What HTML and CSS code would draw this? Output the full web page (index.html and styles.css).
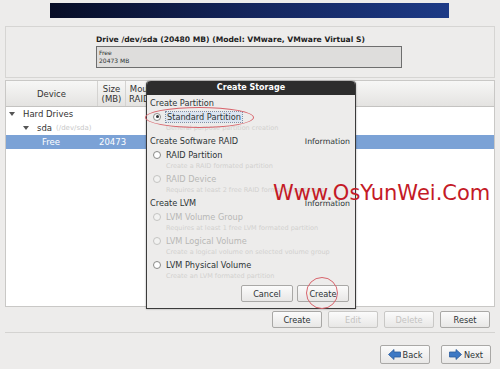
FILE: index.html
```html
<!DOCTYPE html>
<html lang="en">

<head>
    <meta charset="UTF-8">
    <meta name="viewport" content="width=device-width, initial-scale=1.0">
    <title>Create Storage</title>
    <link rel="stylesheet" href="styles.css">
</head>

<body>
    <!-- Banner -->
    <div class="banner"></div>

    <!-- Drive summary -->
    <div class="drive-panel">
        <div class="drive-title">Drive /dev/sda (20480 MB) (Model: VMware, VMware Virtual S)</div>
        <div class="drive-bar">
            <span>Free</span>
            <span>20473 MB</span>
        </div>
    </div>

    <!-- Device table -->
    <div class="table-area">
        <div class="table-head">
            <div class="col col-device">Device</div>
            <div class="col col-size">Size<br>(MB)</div>
            <div class="col col-mount">Mount Point/<br>RAID/Volume</div>
        </div>
        <div class="table-body">
            <div class="row">
                <span class="tri"></span><span>Hard Drives</span>
            </div>
            <div class="row row-sda">
                <span class="tri"></span><span>sda</span><span class="faint">(/dev/sda)</span>
            </div>
            <div class="row row-free">
                <span class="free-name">Free</span><span class="free-size">20473</span>
            </div>
        </div>

        <!-- Create Storage dialog -->
        <div class="dialog">
            <div class="dialog-title">Create Storage</div>
            <div class="dialog-body">
                <div class="group-head">Create Partition</div>
                <div class="option">
                    <span class="radio checked"></span><span class="focus">Standard Partition</span>
                </div>
                <div class="hint">General purpose partition creation</div>

                <div class="group-head">Create Software RAID <span class="info">Information</span></div>
                <div class="option">
                    <span class="radio"></span><span>RAID Partition</span>
                </div>
                <div class="hint">Create a RAID formated partition</div>
                <div class="option disabled">
                    <span class="radio"></span><span>RAID Device</span>
                </div>
                <div class="hint">Requires at least 2 free RAID formated partitions</div>

                <div class="group-head">Create LVM <span class="info">Information</span></div>
                <div class="option disabled">
                    <span class="radio"></span><span>LVM Volume Group</span>
                </div>
                <div class="hint">Requires at least 1 free LVM formated partition</div>
                <div class="option disabled">
                    <span class="radio"></span><span>LVM Logical Volume</span>
                </div>
                <div class="hint">Create a logical volume on selected volume group</div>
                <div class="option">
                    <span class="radio"></span><span>LVM Physical Volume</span>
                </div>
                <div class="hint">Create an LVM formated partition</div>

                <div class="dialog-buttons">
                    <button class="btn">Cancel</button>
                    <button class="btn">Create</button>
                </div>
            </div>
        </div>

        <!-- Red marks over the screenshot -->
        <div class="mark-ellipse"></div>
        <div class="mark-circle"></div>
        <div class="watermark">Www.OsYunWei.Com</div>
    </div>

    <!-- Table actions -->
    <div class="actions">
        <button class="btn">Create</button>
        <button class="btn" disabled>Edit</button>
        <button class="btn" disabled>Delete</button>
        <button class="btn">Reset</button>
    </div>

    <div class="separator"></div>

    <!-- Navigation -->
    <div class="nav">
        <button class="btn nav-btn">
            <svg width="13" height="11" viewBox="0 0 13 11">
                <path d="M0.5 5.5 L6 0.5 L6 3 L12.5 3 L12.5 8 L6 8 L6 10.5 Z" fill="#3d78c4" stroke="#2a5a9c" stroke-width="0.8"/>
            </svg>Back
        </button>
        <button class="btn nav-btn">
            <svg width="13" height="11" viewBox="0 0 13 11">
                <path d="M12.5 5.5 L7 0.5 L7 3 L0.5 3 L0.5 8 L7 8 L7 10.5 Z" fill="#3d78c4" stroke="#2a5a9c" stroke-width="0.8"/>
            </svg>Next
        </button>
    </div>
</body>

</html>
```

FILE: styles.css
```css
/* Общие стили */
body {
    margin: 0;
    width: 500px;
    height: 369px;
    overflow: hidden;
    background-color: #edeceb;
    font-family: "DejaVu Sans", sans-serif;
    font-size: 8px;
    color: #2e3436;
}

/* Баннер сверху */
.banner {
    margin: 3px 0 0 50px;
    width: 399px;
    height: 15px;
    background: linear-gradient(90deg, #070d26, #14255c 50%, #1d3a86);
}

/* Блок диска */
.drive-panel {
    margin: 8px 5px 0;
    height: 50px;
    border: 1px solid #d6d5d3;
    padding-left: 90px;
}

.drive-title {
    margin-top: 8px;
    font-weight: bold;
    font-size: 7.6px;
    color: #1e1e1e;
}

.drive-bar {
    margin-top: 2px;
    width: 306px;
    height: 22px;
    box-sizing: border-box;
    border: 1px solid #6e6e6e;
    background-color: #dedddc;
    display: flex;
    flex-direction: column;
    padding: 2px 0 0 2px;
    font-size: 6px;
    line-height: 8px;
}

/* Таблица устройств */
.table-area {
    position: relative;
    margin: 2px 5px 0;
    height: 225px;
    border: 1px solid #c9c8c6;
    background-color: #fff;
}

.table-head {
    display: flex;
    height: 25px;
    background: linear-gradient(#f7f7f6, #e4e3e1);
    border-bottom: 1px solid #c4c3c1;
}

.col {
    display: flex;
    align-items: center;
    justify-content: center;
    text-align: center;
    font-size: 8.5px;
    line-height: 10px;
    color: #333;
    border-right: 1px solid #d4d3d1;
}

.col-device {
    width: 91px;
}

.col-size {
    width: 27px;
}

.col-mount {
    flex: 1;
    justify-content: flex-start;
    padding-left: 3px;
    border-right: none;
}

.row {
    display: flex;
    align-items: center;
    height: 14px;
    font-size: 8.5px;
    color: #333;
    gap: 4px;
    padding-left: 3px;
}

.row-sda {
    padding-left: 17px;
}

.tri {
    width: 0;
    height: 0;
    border-left: 3px solid transparent;
    border-right: 3px solid transparent;
    border-top: 4px solid #555;
    margin-right: 4px;
}

.faint {
    color: #c9c9c9;
    font-size: 7px;
}

.row-free {
    background-color: #7ba2d6;
    color: #fff;
    padding-left: 0;
}

.free-name {
    width: 36px;
    margin-left: 36px;
}

.free-size {
    margin-left: 17px;
}

/* Диалог */
.dialog {
    position: absolute;
    left: 140px;
    top: 0;
    width: 208px;
    height: 227px;
    border: 1px solid #3b3b3b;
    border-top: none;
    border-radius: 4px 4px 0 0;
    background-color: #edeceb;
    box-shadow: 0 0 2px rgba(0, 0, 0, 0.4);
}

.dialog-title {
    height: 14px;
    line-height: 14px;
    text-align: center;
    background-color: #2d2d2d;
    color: #fff;
    font-weight: bold;
    font-size: 8px;
    border-radius: 4px 4px 0 0;
}

.dialog-body {
    padding: 1px 5px 0 3px;
}

.group-head {
    display: flex;
    justify-content: space-between;
    align-items: center;
    height: 14px;
    font-size: 8.2px;
    color: #2e3436;
}

.info {
    font-size: 7.8px;
}

.option {
    display: flex;
    align-items: center;
    gap: 5px;
    height: 13px;
    font-size: 8.2px;
    color: #2e3436;
}

.option.disabled {
    color: #b8b8b6;
}

.radio {
    width: 6px;
    height: 6px;
    margin-left: 3px;
    border: 1px solid #8a8a88;
    border-radius: 50%;
    background-color: #fff;
    position: relative;
}

.disabled .radio {
    border-color: #c4c4c2;
    background-color: #f2f2f1;
}

.radio.checked::after {
    content: "";
    position: absolute;
    left: 1.5px;
    top: 1.5px;
    width: 3px;
    height: 3px;
    border-radius: 50%;
    background-color: #2e3436;
}

.focus {
    padding: 0 1px;
    background-color: #dbe4f0;
    outline: 1px dotted #7d8fa8;
}

.hint {
    height: 11px;
    line-height: 11px;
    padding-left: 16px;
    font-size: 6.5px;
    color: #d2d1cf;
}

.dialog-buttons {
    display: flex;
    justify-content: flex-end;
    gap: 4px;
    margin-top: 3px;
    margin-right: 1px;
}

/* Кнопки */
.btn {
    width: 50px;
    height: 17px;
    padding: 0;
    border: 1px solid #a9a8a6;
    border-radius: 2px;
    background: linear-gradient(#fbfbfb, #e8e7e6);
    font-family: "DejaVu Sans", sans-serif;
    font-size: 8.2px;
    color: #2e3436;
}

.dialog-buttons .btn {
    width: 52px;
}

.btn:disabled {
    color: #c4c3c1;
    border-color: #c9c8c6;
}

.actions {
    display: flex;
    justify-content: flex-end;
    gap: 6px;
    margin: 4px 10px 0 0;
}

.separator {
    margin: 4px 5px 0;
    border-top: 1px solid #d4d3d1;
}

.nav {
    display: flex;
    justify-content: flex-end;
    gap: 11px;
    margin: 12px 9px 0 0;
}

.nav-btn {
    height: 19px;
    display: flex;
    align-items: center;
    justify-content: center;
    gap: 2px;
}

/* Пометки поверх скриншота */
.mark-ellipse {
    position: absolute;
    left: 139px;
    top: 26px;
    width: 107px;
    height: 19px;
    border: 1px solid #d8646c;
    border-radius: 50%;
}

.mark-circle {
    position: absolute;
    left: 300px;
    top: 196px;
    width: 30px;
    height: 30px;
    border: 1px solid #d8646c;
    border-radius: 50%;
}

.watermark {
    position: absolute;
    left: 267px;
    top: 100px;
    font-family: "DejaVu Sans", sans-serif;
    font-size: 21px;
    color: #c41a26;
    white-space: nowrap;
}
```
